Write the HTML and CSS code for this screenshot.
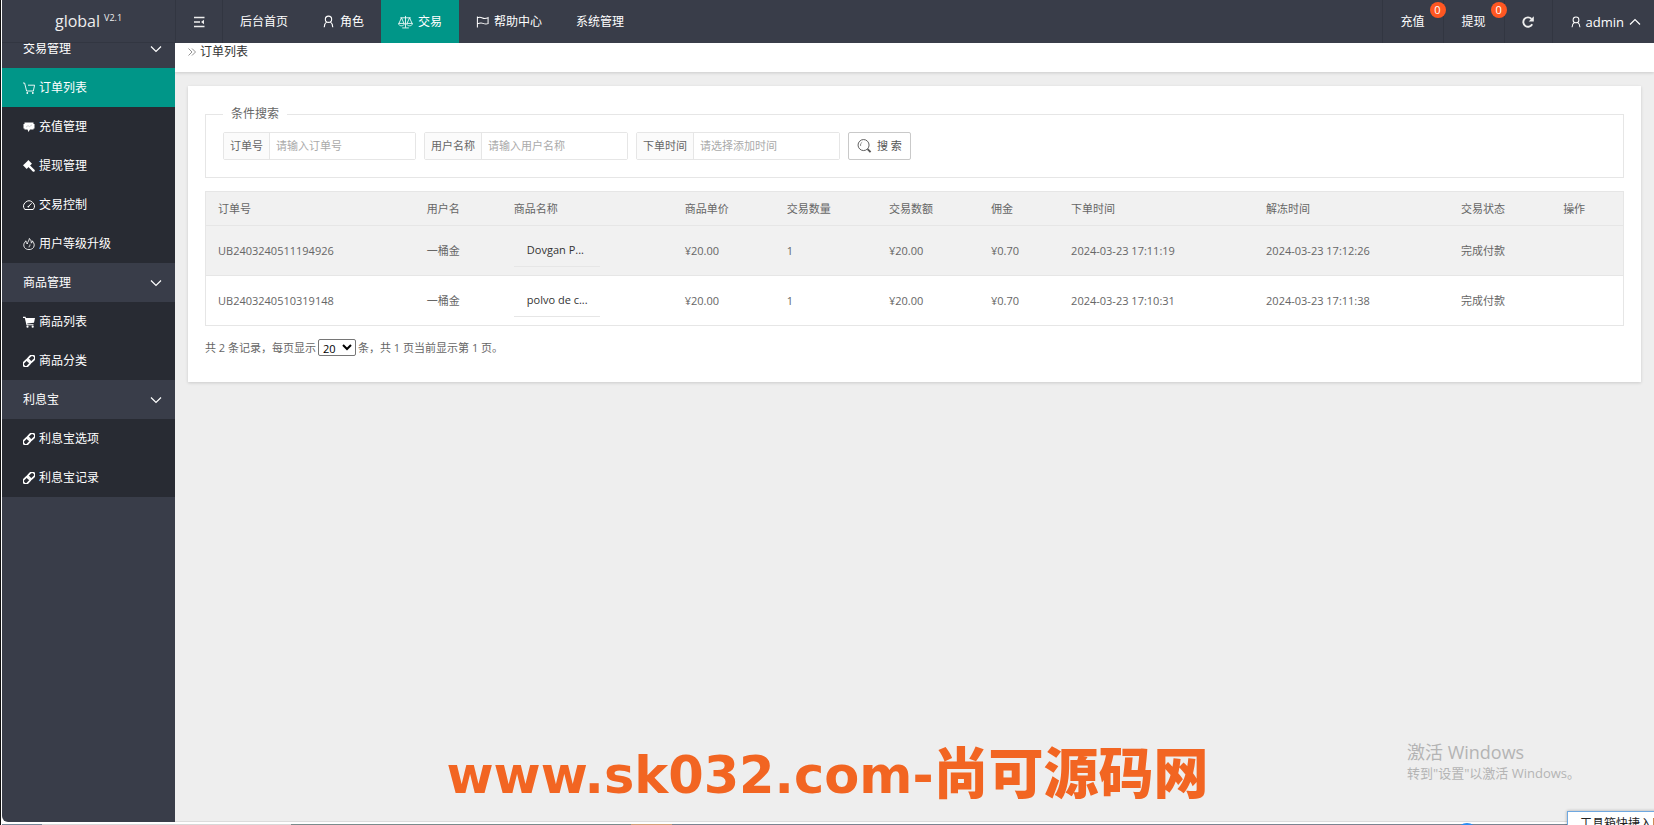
FILE: index.html
```html
<!DOCTYPE html>
<html lang="zh-CN">
<head>
<meta charset="utf-8">
<title>订单列表</title>
<link rel="stylesheet" href="styles.css">
</head>
<body>
<svg class="sprite" aria-hidden="true">
  <symbol id="i-user" viewBox="0 0 14 14"><g fill="none" stroke="currentColor" stroke-width="1.2"><circle cx="7" cy="4.6" r="3.4"/><path d="M5 7.4C3.200 8.600 2.600 10.500 2.400 13.200M9 7.400C10.800 8.600 11.400 10.500 11.600 13.200"/></g></symbol>
  <symbol id="i-down" viewBox="0 0 12 12"><path d="M1 3.500L6 8.500L11 3.500" fill="none" stroke="currentColor" stroke-width="1.200"/></symbol>
  <symbol id="i-up" viewBox="0 0 12 12"><path d="M1 8.500L6 3.500L11 8.500" fill="none" stroke="currentColor" stroke-width="1.200"/></symbol>
  <symbol id="i-link" viewBox="0 0 12 12"><g fill="none" stroke="currentColor" stroke-width="1.700" transform="rotate(-45 6 6)"><rect x="-1" y="3.400" width="7.800" height="5.200" rx="2.400"/><rect x="5.200" y="3.400" width="7.800" height="5.200" rx="2.400"/></g></symbol>
</svg>

<header class="topbar">
  <a class="logo" href="#">global <sup>V2.1</sup></a>
  <button class="toggle" type="button" aria-label="收起菜单">
    <svg class="icon" viewBox="0 0 12 12"><path d="M1 1.500H11.500M1 6H7M1 10.500H11.500" stroke="currentColor" stroke-width="1.500"/><path d="M11 3.800V8.200L8 6Z" fill="currentColor"/></svg>
  </button>
  <nav class="mainnav">
    <a href="#">后台首页</a>
    <a href="#"><svg class="icon-md"><use href="#i-user"/></svg>角色</a>
    <a href="#" class="active"><svg class="icon-lg" viewBox="0 0 16 14"><path d="M8 .5V13M4.500 13.300H11.500M2.500 2.500H13.500M3.700 2.500L1 8.500M3.700 2.500L6.400 8.500M12.300 2.500L9.600 8.500M12.300 2.500L15 8.500M.6 8.500H6.800C6.500 10.500 5.300 11 3.700 11S.9 10.500.6 8.500ZM9.200 8.500H15.400C15.100 10.500 13.900 11 12.300 11S9.500 10.500 9.200 8.500Z" fill="none" stroke="currentColor" stroke-width=".9"/></svg>交易</a>
    <a href="#"><svg class="icon-md" viewBox="0 0 14 14"><path d="M1.500 1.500V13.500M1.500 3C4 1.800 5.500 2.500 7 3.200S10.500 4 13 2.800V9.300C10.500 10.200 9 9.600 7.500 9S4 8.500 1.500 9.500" fill="none" stroke="currentColor" stroke-width="1.100"/></svg>帮助中心</a>
    <a href="#">系统管理</a>
  </nav>
  <nav class="tools">
    <a class="tool" href="#">充值<span class="badge">0</span></a>
    <a class="tool" href="#">提现<span class="badge">0</span></a>
    <button class="refresh" type="button" aria-label="刷新"><svg class="icon" viewBox="0 0 12 12"><path d="M10.200 8.200A4.700 4.700 0 1 1 9.500 2.900" fill="none" stroke="currentColor" stroke-width="1.900"/><path d="M11.800.3V5.400H6.700Z" fill="currentColor"/></svg></button>
    <a class="account" href="#"><svg class="icon"><use href="#i-user"/></svg>admin<svg class="icon chevron"><use href="#i-up"/></svg></a>
  </nav>
</header>

<div class="shell">
  <aside class="sidebar">
    <nav class="menu">
      <button class="group" type="button">交易管理<svg class="icon"><use href="#i-down"/></svg></button>
      <a class="active" href="#"><svg class="icon" viewBox="0 0 12 12"><path d="M0 1H1.600L3.600 9H10.500M5 3.200H11.600L10.300 9" fill="none" stroke="currentColor" stroke-width=".9"/><circle cx="4.300" cy="11" r=".9" fill="currentColor"/><circle cx="9.800" cy="11" r=".9" fill="currentColor"/></svg>订单列表</a>
      <a href="#"><svg class="icon" viewBox="0 0 12 12"><path d="M1.500 1.500H10.500V3H11.500V7.500H10.500V8.500H7L5.500 11L4.500 8.500H1.500V7.500H.5V3H1.500Z" fill="currentColor"/><path d="M3 6.200L5 4.600L6.500 5.600L9 3.800" stroke="#b9bbc0" stroke-width=".7" fill="none"/></svg>充值管理</a>
      <a href="#"><svg class="icon" viewBox="0 0 12 12"><path d="M5.300 0L9 3.700L8.100 4.500L4.400 8.200L3.700 9L0 5.300L.9 4.500L4.500.9Z" fill="currentColor"/><path d="M6 6L10.600 10.600" stroke="currentColor" stroke-width="2.400" stroke-linecap="round"/></svg>提现管理</a>
      <a href="#"><svg class="icon" viewBox="0 0 12 12"><path d="M1.800 10.500A5.300 5.300 0 1 1 10.200 10.500ZM5.500 7.500L8.600 4.200" fill="none" stroke="currentColor" stroke-width="1"/><circle cx="5.400" cy="7.600" r=".9" fill="currentColor"/></svg>交易控制</a>
      <a href="#"><svg class="icon" viewBox="0 0 12 12"><path d="M3 2.800C.5 5 .3 7.500 1.500 9.500C3.500 12.300 8.500 12.300 10.500 9.500C11.700 7.500 11.400 5 9.300 2.800C9.300 4 9 4.600 8.300 5.200C8.300 3.200 7.800 1.600 6.300.5C6.300 2.700 4.500 3.800 4.300 6C3.400 5.300 3 4.300 3 2.800ZM7 6.500C7 8 6.200 8 6 9.300" fill="none" stroke="currentColor" stroke-width=".9"/></svg>用户等级升级</a>
      <button class="group" type="button">商品管理<svg class="icon"><use href="#i-down"/></svg></button>
      <a href="#"><svg class="icon" viewBox="0 0 12 12"><path d="M0 .8H2.600L2.900 2H12L11 6.800L4.200 7.500L4.400 8.300H10.500V9.300H3.500L1.800 1.900H0Z" fill="currentColor"/><circle cx="4.500" cy="10.700" r="1.100" fill="currentColor"/><circle cx="9.700" cy="10.700" r="1.100" fill="currentColor"/></svg>商品列表</a>
      <a href="#"><svg class="icon"><use href="#i-link"/></svg>商品分类</a>
      <button class="group" type="button">利息宝<svg class="icon"><use href="#i-down"/></svg></button>
      <a href="#"><svg class="icon"><use href="#i-link"/></svg>利息宝选项</a>
      <a href="#"><svg class="icon"><use href="#i-link"/></svg>利息宝记录</a>
    </nav>
  </aside>

  <main class="content">
    <div class="crumb"><svg class="crumb-icon" viewBox="0 0 8 8"><path d="M.5.500L4 4L.5 7.500M4 .5L7.500 4L4 7.500" fill="none" stroke="currentColor" stroke-width=".8"/></svg>订单列表</div>
    <section class="card">
      <form>
        <fieldset class="search">
          <legend>条件搜索</legend>
          <div class="fields">
            <div class="field"><label for="oid">订单号</label><input id="oid" type="text" placeholder="请输入订单号"></div>
            <div class="field"><label for="uname">用户名称</label><input id="uname" type="text" placeholder="请输入用户名称"></div>
            <div class="field"><label for="otime">下单时间</label><input id="otime" type="text" placeholder="请选择添加时间"></div>
            <button class="submit" type="button"><svg class="icon-lg" viewBox="0 0 15 15"><circle cx="6.500" cy="6.500" r="5.900" fill="none" stroke="currentColor"/><path d="M3.300 7.500A3.400 3.400 0 0 1 5 3.500" fill="none" stroke="currentColor" stroke-width=".7"/><path d="M10.800 10.800L14 14" stroke="currentColor" stroke-width="2"/></svg>搜 索</button>
          </div>
        </fieldset>
      </form>
      <table class="orders">
        <colgroup><col class="c-id"><col class="c-user"><col class="c-name"><col class="c-num"><col class="c-num"><col class="c-num"><col class="c-fee"><col class="c-time"><col class="c-time"><col class="c-num"><col class="c-op"></colgroup>
        <thead><tr><th>订单号</th><th>用户名</th><th>商品名称</th><th>商品单价</th><th>交易数量</th><th>交易数额</th><th>佣金</th><th>下单时间</th><th>解冻时间</th><th>交易状态</th><th>操作</th></tr></thead>
        <tbody>
          <tr class="hover"><td>UB2403240511194926</td><td>一桶金</td><td><div class="product">Dovgan P...</div></td><td>¥20.00</td><td>1</td><td>¥20.00</td><td>¥0.70</td><td>2024-03-23 17:11:19</td><td>2024-03-23 17:12:26</td><td>完成付款</td><td></td></tr>
          <tr><td>UB2403240510319148</td><td>一桶金</td><td><div class="product">polvo de c...</div></td><td>¥20.00</td><td>1</td><td>¥20.00</td><td>¥0.70</td><td>2024-03-23 17:10:31</td><td>2024-03-23 17:11:38</td><td>完成付款</td><td></td></tr>
        </tbody>
      </table>
      <div class="pager"><label for="size">共 2 条记录，每页显示</label><select id="size"><option>20</option><option>40</option></select><span>条，共 1 页当前显示第 1 页。</span></div>
    </section>
  </main>
</div>
<div class="desktop-edge"><span class="orb"></span></div>

<div class="watermark"><span>www.sk032.com-</span><span class="cjk">尚可源码网</span></div>
<div class="activate"><div class="activate-title">激活 Windows</div><div>转到"设置"以激活 Windows。</div></div>
<div class="tip">工具箱快捷入口</div>
</body>
</html>
```
FILE: styles.css
```css
* { box-sizing: border-box; }

body {
  margin: 0;
  height: 100vh;
  display: flex;
  flex-direction: column;
  position: relative;
  overflow: hidden;
  border-left: 1px solid #111;
  padding-left: 1px;
  background: #fff;
  color: #333;
  font: 12px/16px "Open Sans", "Noto Sans CJK SC", sans-serif;
}

a { color: inherit; text-decoration: none; }
button, input, select { font: inherit; color: inherit; }
svg { flex: none; }
.sprite { position: absolute; width: 0; height: 0; }
.icon { width: 12px; height: 12px; }
.icon-md { width: 13px; height: 13px; }
.icon-lg { width: 15px; height: 14px; }

/* top bar */
.topbar {
  flex: none;
  display: flex;
  height: 43px;
  background: #393d49;
  color: #fff;
  position: relative;
  z-index: 2;
  padding-right: 1px;
}
.logo {
  width: 173px;
  display: flex;
  align-items: center;
  justify-content: center;
  gap: 4px;
  font-size: 16px;
  color: #eee;
  border-bottom: 1px solid #323641;
}
.logo sup { font-size: 9px; line-height: 12px; margin-bottom: 7px; vertical-align: baseline; }
.toggle, .refresh {
  display: flex;
  align-items: center;
  justify-content: center;
  background: none;
  border: 0;
  border-left: 1px solid #323641;
  color: #eee;
  padding: 0;
}
.toggle { width: 48px; border-right: 1px solid #323641; }
.mainnav { display: flex; flex: 1; }
.mainnav a { display: flex; align-items: center; gap: 5px; padding: 0 17px; }
.mainnav .active { background: #009688; }
.tools { display: flex; }
.tool {
  position: relative;
  display: flex;
  align-items: center;
  padding: 0 18px;
  border-left: 1px solid #323641;
}
.badge {
  position: absolute;
  top: 2px;
  right: -3px;
  z-index: 1;
  width: 16px;
  height: 16px;
  border-radius: 8px;
  background: #ff5722;
  font-size: 11px;
  text-align: center;
}
.refresh { width: 48px; }
.account {
  display: flex;
  align-items: center;
  gap: 4px;
  padding: 0 12px 0 17px;
  font-size: 13px;
  border-left: 1px solid #323641;
}
.chevron { margin-left: 1px; }

/* shell */
.shell { flex: 1; min-height: 0; display: flex; }
.sidebar {
  width: 173px;
  flex: none;
  overflow: hidden;
  background: #393d49;
  color: #fff;
  border-bottom-left-radius: 6px;
}
.menu { display: flex; flex-direction: column; margin-top: -14px; background: #282b33; }
.menu a, .group { display: flex; align-items: center; height: 39px; padding: 1px 13px 0 21px; }
.menu a { gap: 4px; }
.menu .active { background: #009688; }
.group { justify-content: space-between; border: 0; background: #393d49; text-align: left; }

.content { flex: 1; min-width: 0; background: #eee; border-bottom: 1px solid #dcdcdc; overflow: hidden; }
.crumb {
  display: flex;
  align-items: center;
  gap: 4px;
  height: 43px;
  margin-top: -14px;
  padding: 2px 0 0 13px;
  background: #fff;
  box-shadow: 0 1px 3px rgba(0, 0, 0, .15);
}
.crumb-icon { width: 8px; height: 8px; color: #777; }
.card {
  margin: 14px 13px;
  padding: 20px 17px 26px;
  background: #fff;
  color: #666;
  font-size: 11px;
  box-shadow: 0 1px 3px rgba(0, 0, 0, .15);
}

/* search */
.search { margin: 0; padding: 10px 17px 17px; border: 1px solid #e6e6e6; }
.search legend { padding: 0 8px; font-size: 12px; }
.fields { display: flex; flex-wrap: wrap; gap: 8px; }
.field { display: flex; height: 28px; border: 1px solid #e6e6e6; border-radius: 2px; }
.field label { padding: 5px 6px; background: #fbfbfb; border-right: 1px solid #e6e6e6; }
.field input { width: 145px; min-width: 0; padding: 0 6px; border: 0; background: #fff; outline: 0; }
.field input::placeholder { color: #aaa; }
.submit {
  display: flex;
  align-items: center;
  gap: 5px;
  height: 28px;
  padding: 0 8px;
  border: 1px solid #c9c9c9;
  border-radius: 2px;
  background: #fff;
  color: #555;
}

/* orders */
.orders {
  width: 100%;
  margin-top: 13px;
  table-layout: fixed;
  border-collapse: collapse;
  border: 1px solid #e6e6e6;
}
.orders th, .orders td {
  padding: 0 12px;
  text-align: left;
  font-weight: 400;
  white-space: nowrap;
  border-bottom: 1px solid #e6e6e6;
}
.orders th { height: 34px; }
.orders td { height: 50px; }
.orders thead, .orders .hover { background: #f1f1f1; }
.c-id { width: 14.75%; }
.c-user { width: 6.15%; }
.c-name { width: 12.05%; }
.c-num { width: 7.2%; }
.c-fee { width: 5.65%; }
.c-time { width: 13.75%; }
.c-op { width: 5.1%; }
.product { width: 86px; padding: 8px 13px; color: #333; border-bottom: 1px solid #e6e6e6; }

.pager { display: flex; align-items: center; gap: 2px; margin-top: 13px; }
.pager select {
  width: 38px;
  height: 17px;
  padding: 0;
  border: 1px solid #767676;
  border-radius: 2px;
  background: #fff;
  color: #000;
}

/* strip under the window */
.desktop-edge {
  position: relative;
  flex: none;
  height: 3px;
  background: linear-gradient(90deg, #789 0 40px, #d8d8d8 40px 289px, #7a8c8c 289px 629px, #d2a27a 629px 670px, #7b8591 670px) bottom / 100% 1px no-repeat #fff;
}
.orb { position: absolute; left: 88%; top: 1px; width: 22px; height: 22px; border-radius: 50%; background: #2b8cf0; }

/* overlays */
.watermark {
  position: absolute;
  left: 0;
  right: 0;
  bottom: 14px;
  z-index: 3;
  display: flex;
  align-items: baseline;
  justify-content: center;
  color: #f26522;
  font: 700 51px/70px "DejaVu Sans", sans-serif;
  pointer-events: none;
}
.watermark .cjk { font-family: "Noto Sans CJK SC", sans-serif; font-size: 55px; font-weight: 900; }
.activate {
  position: absolute;
  right: 74px;
  bottom: 43px;
  z-index: 3;
  color: #b4b4b4;
  font-size: 13px;
  line-height: 18px;
  pointer-events: none;
}
.activate-title { font-size: 18px; line-height: 24px; }
.tip {
  position: absolute;
  right: -13px;
  bottom: -13px;
  z-index: 4;
  width: 100px;
  height: 27px;
  padding: 4px 0 0 12px;
  overflow: hidden;
  white-space: nowrap;
  background: #fff;
  border: 1px solid #6fa8e0;
  color: #222;
  box-shadow: 0 0 3px rgba(0, 0, 0, .3);
}
```
